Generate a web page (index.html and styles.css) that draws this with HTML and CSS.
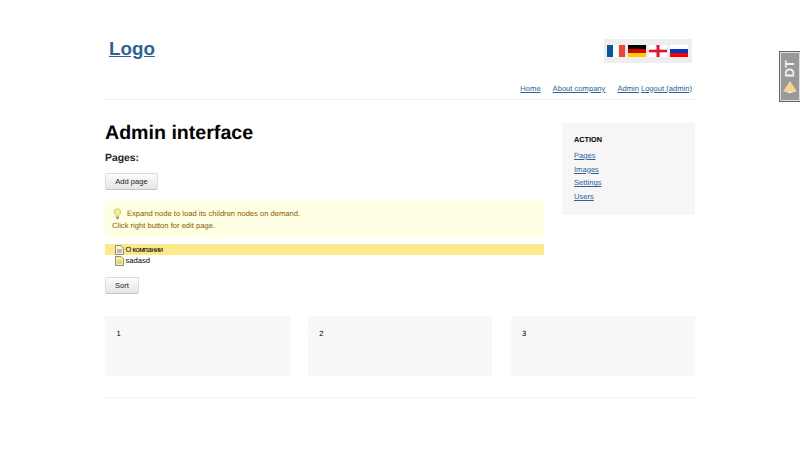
FILE: index.html
```html
<!DOCTYPE html>
<html lang="en">
<head>
<meta charset="utf-8">
<title>Admin interface</title>
<link rel="stylesheet" href="styles.css">
</head>
<body>
<div class="page">
  <header class="header">
    <div class="brand-row">
      <a class="logo" href="#">Logo</a>
      <div class="flags">
        <svg class="flag" viewBox="0 0 18 12"><rect width="6" height="12" fill="#0b55a5"/><rect x="6" width="6" height="12" fill="#fff"/><rect x="12" width="6" height="12" fill="#f4423a"/></svg>
        <svg class="flag" viewBox="0 0 18 12"><rect width="18" height="4" fill="#000"/><rect y="4" width="18" height="4" fill="#dd0000"/><rect y="8" width="18" height="4" fill="#ffce00"/></svg>
        <svg class="flag" viewBox="0 0 18 12"><rect width="18" height="12" fill="#fff"/><rect x="7.5" width="3" height="12" fill="#e8112d"/><rect y="4.7" width="18" height="2.6" fill="#e8112d"/></svg>
        <svg class="flag" viewBox="0 0 18 12"><rect width="18" height="4" fill="#fff"/><rect y="4" width="18" height="4" fill="#0039c6"/><rect y="8" width="18" height="4" fill="#f00"/></svg>
      </div>
    </div>
    <nav class="nav">
      <a href="#">Home</a><a href="#">About company</a><a href="#">Admin</a><a class="logout" href="#">Logout (admin)</a>
    </nav>
  </header>

  <div class="columns">
    <main class="main">
      <h1 class="title">Admin interface</h1>
      <h2 class="subtitle">Pages:</h2>
      <button class="btn btn-add" type="button">Add page</button>
      <div class="notice">
        <p class="notice-line">
          <svg class="bulb" viewBox="0 0 10 14"><path d="M5 .8a3.9 3.9 0 0 0-2.3 7c.6.5.8 1 .8 1.9h3c0-.9.2-1.400.8-1.900A3.900 3.900 0 0 0 5 .8z" fill="#f7ef8e" stroke="#b9b36a" stroke-width=".8"/><rect x="3.500" y="10" width="3" height="3" rx=".8" fill="#9a9a8c"/></svg>
          Expand node to load its children nodes on demand.
        </p>
        <p class="notice-plain">Click right button for edit page.</p>
      </div>
      <ul class="tree">
        <li class="tree-item selected">
          <svg class="doc" viewBox="0 0 9 10"><path d="M.5.5h5.500l2.500 2.500v6.500h-8z" fill="#f7f4dc" stroke="#77756a" stroke-width=".8"/><path d="M2 5h5M2 7h5" stroke="#77756a" stroke-width=".9"/></svg>
          <span>О компании</span>
        </li>
        <li class="tree-item">
          <svg class="doc" viewBox="0 0 9 10"><path d="M.5.5h5.500l2.500 2.500v6.500h-8z" fill="#f8efa0" stroke="#77756a" stroke-width=".8"/><path d="M2 5h5M2 7h5" stroke="#c9b64a" stroke-width=".9"/></svg>
          <span>sadasd</span>
        </li>
      </ul>
      <button class="btn btn-sort" type="button">Sort</button>
    </main>
    <aside class="sidebar">
      <h3 class="sidebar-title">ACTION</h3>
      <ul class="sidebar-links">
        <li><a href="#">Pages</a></li>
        <li><a href="#">Images</a></li>
        <li><a href="#">Settings</a></li>
        <li><a href="#">Users</a></li>
      </ul>
    </aside>
  </div>

  <section class="boxes">
    <div class="box">1</div>
    <div class="box">2</div>
    <div class="box">3</div>
  </section>
  <footer class="footer"></footer>
</div>

<div class="dt-tab">
  <span class="dt-text">DT</span>
  <svg class="dt-arrow" viewBox="0 0 14 12"><path d="M7 0 14 10.500H0z" fill="#f7d48a"/><path d="M1 10.500h12L7 12z" fill="#fff"/></svg>
</div>
</body>
</html>
```
FILE: styles.css
```css
* { box-sizing: border-box; }
html, body { margin: 0; padding: 0; }
body {
  background: #fff;
  color: #000;
  font-family: "Liberation Sans", Arial, sans-serif;
  font-size: 7.6px;
  text-rendering: geometricPrecision;
  overflow: hidden;
}
a { color: #2d6399; text-decoration: underline; }
.page { width: 590px; margin-left: 105px; }

.header { height: 100px; border-bottom: 1px solid #eee; padding-top: 39px; }
.brand-row { display: flex; justify-content: space-between; align-items: flex-start; height: 41.500px; padding-left: 4px; padding-right: 3px; }
.logo { font-size: 18.800px; font-weight: bold; line-height: 20px; }
.flags { display: flex; gap: 3px; align-items: center; width: 88px; height: 24px; padding-left: 3px; background: #eee; }
.flag { display: block; width: 18px; height: 12px; }

.nav { display: flex; justify-content: flex-end; padding-right: 3px; line-height: 16px; }
.nav a { margin-left: 12px; }
.nav .logout { margin-left: 2px; }

.columns { display: flex; justify-content: space-between; align-items: flex-start; padding-top: 23px; }
.main { width: 439px; }
.title { margin: 0; font-size: 19.600px; line-height: 20px; font-weight: bold; }
.subtitle { margin: 9px 0 0; font-size: 10.400px; line-height: 14px; font-weight: bold; color: #222; }

.btn {
  display: block;
  height: 17px;
  padding: 0;
  border: 1px solid #ddd;
  border-bottom-color: #c4c4c4;
  border-radius: 2px;
  background: linear-gradient(#fbfbfb, #e6e6e6);
  color: #222;
  font: 7.600px "Liberation Sans", Arial, sans-serif;
}
.btn-add { width: 53px; margin-top: 7px; }
.btn-sort { width: 34px; margin-top: 11px; }

.notice { margin-top: 11px; height: 37px; padding: 7px 7px 0; background: #ffffe3; color: #8a5a00; }
.notice p { margin: 0; line-height: 11.500px; }
.notice-line { display: flex; align-items: center; gap: 5px; }
.bulb { width: 9px; height: 12px; margin-left: 1px; flex: none; }

.tree { list-style: none; margin: 6px 0 0; padding: 0; }
.tree-item { display: flex; align-items: center; gap: 1.500px; height: 11px; padding-left: 10px; }
.tree-item.selected { background: #fbe98c; }
.tree-item.selected span { letter-spacing: -.5px; }
.doc { width: 9px; height: 10px; flex: none; }

.sidebar { width: 133px; height: 92px; padding: 12px 12px 0; background: #f6f6f6; }
.sidebar-title { margin: 0; font-size: 7.300px; line-height: 9px; font-weight: bold; }
.sidebar-links { list-style: none; margin: 5px 0 0; padding: 0; }
.sidebar-links li { line-height: 13.700px; }

.boxes { display: flex; justify-content: space-between; margin-top: 22px; }
.box { width: 184.500px; height: 60px; padding: 12px 11.500px; background: #f8f8f8; line-height: 11px; }
.footer { margin-top: 21px; border-top: 1px solid #f4f4f4; }

.dt-tab {
  position: fixed;
  top: 51px;
  right: 0;
  width: 21px;
  height: 51px;
  display: flex;
  flex-direction: column;
  align-items: center;
  padding-top: 8px;
  background: #999;
  border: 1px solid #666;
  border-right: 0;
  box-shadow: inset 0 0 0 1px #ddd;
}
.dt-text { color: #f2f2f2; font-size: 13px; font-weight: bold; line-height: 20px; writing-mode: vertical-rl; transform: rotate(180deg); }
.dt-arrow { width: 14px; height: 12px; margin-top: 4px; }
```
